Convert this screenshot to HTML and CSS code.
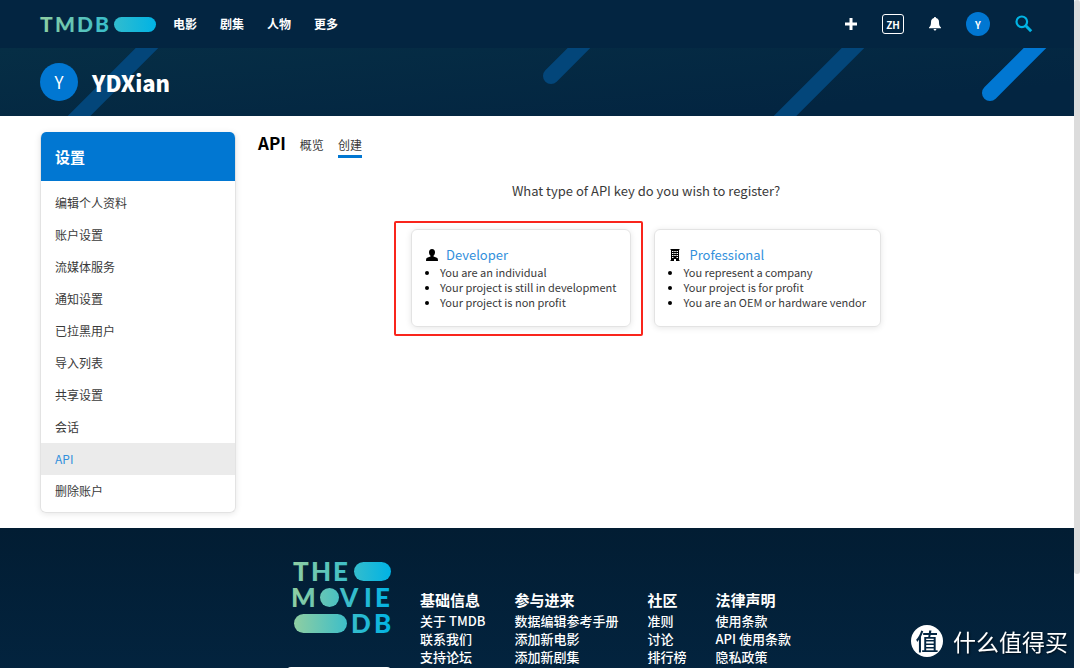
FILE: index.html
```
<!DOCTYPE html>
<html lang="zh-CN">
<head>
  <meta charset="UTF-8">
  <title>API - TMDB</title>
  <meta name="viewport" content="width=device-width, initial-scale=1.0">
  <link rel="stylesheet" href="styles.css">
</head>
<body>

  <div class="page">
    <header class="topbar">
      <a class="logo" href="#" aria-label="TMDB">
        <svg width="116" height="16" viewBox="0 0 116 16">
          <defs>
            <linearGradient id="brand" gradientUnits="userSpaceOnUse" x1="0" y1="0" x2="116" y2="0">
              <stop offset="0" stop-color="#90cea1"/>
              <stop offset="0.56" stop-color="#3cbec9"/>
              <stop offset="1" stop-color="#00b3e5"/>
            </linearGradient>
          </defs>
          <text class="logo-text" x="0 15 37 55" y="16" fill="url(#brand)">TMDB</text>
          <rect x="74" y="1" width="42" height="15" rx="7.5" fill="url(#brand)"/>
        </svg>
      </a>
      <nav class="menu">
        <a href="#">电影</a>
        <a href="#">剧集</a>
        <a href="#">人物</a>
        <a href="#">更多</a>
      </nav>
      <div class="actions">
        <button type="button" aria-label="添加">
          <svg width="12" height="12" viewBox="0 0 12 12"><path d="M4.500 0h3v4.500H12v3H7.500V12h-3V7.500H0v-3h4.500z" fill="#fff"/></svg>
        </button>
        <button type="button" class="lang">ZH</button>
        <button type="button" aria-label="通知">
          <svg width="12" height="14" viewBox="0 0 12 14"><path d="M6 0c.7 0 1 .4 1 1 2 .5 3 2 3 4 0 3.200.6 4.300 2 5.500v.7H0v-.7C1.400 9.300 2 8.200 2 5c0-2 1-3.500 3-4 0-.6.300-1 1-1zM4.600 12h2.800c0 .9-.6 1.500-1.400 1.500S4.600 12.900 4.600 12z" fill="#fff"/></svg>
        </button>
        <button type="button" class="avatar avatar-small">Y</button>
        <button type="button" aria-label="搜索">
          <svg width="18" height="18" viewBox="0 0 18 18" fill="none" stroke="#01b4e4"><circle cx="6.800" cy="6.800" r="5.300" stroke-width="2.200"/><path d="M10.800 10.800l5.400 5.400" stroke-width="3"/></svg>
        </button>
      </div>
    </header>

    <section class="banner">
      <svg class="stripes" viewBox="0 0 1074 68" preserveAspectRatio="xMidYMid slice" fill="none" stroke-width="16" stroke-linecap="round">
        <path d="M167-20L59 88M551 28l50-50M873-20L765 88" stroke="#03467a"/>
        <path d="M990 45l66-66" stroke="#0177d2"/>
      </svg>
      <span class="avatar avatar-large">Y</span>
      <h1>YDXian</h1>
    </section>

    <main class="content">
      <aside class="settings">
        <h2>设置</h2>
        <ul>
          <li><a href="#">编辑个人资料</a></li>
          <li><a href="#">账户设置</a></li>
          <li><a href="#">流媒体服务</a></li>
          <li><a href="#">通知设置</a></li>
          <li><a href="#">已拉黑用户</a></li>
          <li><a href="#">导入列表</a></li>
          <li><a href="#">共享设置</a></li>
          <li><a href="#">会话</a></li>
          <li><a href="#" class="active">API</a></li>
          <li><a href="#">删除账户</a></li>
        </ul>
      </aside>

      <section class="panel">
        <div class="tabs">
          <h2>API</h2>
          <a href="#">概览</a>
          <a href="#" class="active">创建</a>
        </div>
        <p class="question">What type of API key do you wish to register?</p>
        <div class="cards">
          <div class="card highlight">
            <h3>
              <svg width="12" height="12" viewBox="0 0 12 12"><path d="M6 0c2 0 3 1.300 3 3.200 0 1.600-.6 2.800-1.500 3.500v.8c1.800.7 4 1.100 4.300 2.300L12 12H0l.2-2.200c.3-1.200 2.500-1.600 4.300-2.300v-.8C3.600 6 3 4.800 3 3.200 3 1.300 4 0 6 0z"/></svg>
              <a href="#">Developer</a>
            </h3>
            <ul>
              <li>You are an individual</li>
              <li>Your project is still in development</li>
              <li>Your project is non profit</li>
            </ul>
          </div>
          <div class="card">
            <h3>
              <svg width="12" height="12" viewBox="0 0 12 12"><path fill-rule="evenodd" d="M1.500 0h9v1H10v10h.5v1H7V10H5v2H1.500v-1H2V1h-.5zM3 2v1h1.500V2zm2.250 0v1h1.500V2zM7.500 2v1H9V2zM3 4v1h1.500V4zm2.250 0v1h1.500V4zM7.500 4v1H9V4zM3 6v1h1.500V6zm2.250 0v1h1.500V6zM7.500 6v1H9V6zM3 8v1h1.500V8zm4.500 0v1H9V8z"/></svg>
              <a href="#">Professional</a>
            </h3>
            <ul>
              <li>You represent a company</li>
              <li>Your project is for profit</li>
              <li>You are an OEM or hardware vendor</li>
            </ul>
          </div>
        </div>
      </section>
    </main>

    <footer class="footer">
      <div class="join">
        <svg width="98" height="72" viewBox="0 0 98 72">
          <defs>
            <linearGradient id="stack" gradientUnits="userSpaceOnUse" x1="0" y1="0" x2="98" y2="0">
              <stop offset="0" stop-color="#90cea1"/>
              <stop offset="0.56" stop-color="#3cbec9"/>
              <stop offset="1" stop-color="#00b3e5"/>
            </linearGradient>
          </defs>
          <g class="stack-text" fill="url(#stack)">
            <text x="0 18 40" y="19">THE</text>
            <text x="-2" y="45">M</text>
            <text x="47 71 82" y="45">VIE</text>
            <text x="58 81" y="71">DB</text>
            <rect x="61" y="0" width="37" height="19" rx="9.500"/>
            <circle cx="36.500" cy="35.500" r="9.500"/>
            <rect x="1" y="52" width="53" height="19" rx="9.500"/>
          </g>
        </svg>
        <div class="join-box"></div>
      </div>
      <div class="links">
        <h3>基础信息</h3>
        <a href="#">关于 TMDB</a>
        <a href="#">联系我们</a>
        <a href="#">支持论坛</a>
      </div>
      <div class="links">
        <h3>参与进来</h3>
        <a href="#">数据编辑参考手册</a>
        <a href="#">添加新电影</a>
        <a href="#">添加新剧集</a>
      </div>
      <div class="links">
        <h3>社区</h3>
        <a href="#">准则</a>
        <a href="#">讨论</a>
        <a href="#">排行榜</a>
      </div>
      <div class="links">
        <h3>法律声明</h3>
        <a href="#">使用条款</a>
        <a href="#">API 使用条款</a>
        <a href="#">隐私政策</a>
      </div>
    </footer>
  </div>

  <div class="scrollbar"><div class="thumb"></div></div>

  <div class="watermark">
    <span class="mark">值</span>
    <span>什么值得买</span>
  </div>

</body>
</html>
```
FILE: styles.css
```
* {
  box-sizing: border-box;
}
body {
  margin: 0;
  height: 100vh;
  display: flex;
  overflow: hidden;
  font-family: "Noto Sans CJK SC", sans-serif;
  font-size: 12px;
  line-height: 16px;
  color: #3a3a3a;
  background: #fff;
}
h1, h2, h3, p, ul {
  margin: 0;
  padding: 0;
}
a {
  color: inherit;
  text-decoration: none;
}
button {
  display: flex;
  align-items: center;
  justify-content: center;
  padding: 0;
  border: none;
  background: none;
  color: #fff;
  font-family: inherit;
  cursor: pointer;
}
svg {
  display: block;
  overflow: visible;
}
.page {
  flex: 1;
  display: flex;
  flex-direction: column;
  overflow: hidden;
}

/* header */
.topbar {
  flex: none;
  display: flex;
  align-items: center;
  height: 48px;
  padding: 0 41px 0 40px;
  background: #032541;
  color: #fff;
}
.logo-text {
  font: 900 21px Lato, sans-serif;
}
.menu {
  display: flex;
  gap: 23px;
  margin-left: 17px;
  font-weight: 700;
}
.actions {
  display: flex;
  align-items: center;
  gap: 25px;
  margin-left: auto;
}
.lang {
  width: 22px;
  height: 20px;
  border: 1px solid #fff;
  border-radius: 3px;
  font-size: 10px;
  font-weight: 700;
}
.avatar {
  display: flex;
  align-items: center;
  justify-content: center;
  border-radius: 50%;
  background: #0177d2;
  color: #fff;
}
.avatar-small {
  width: 24px;
  height: 24px;
  font-size: 10px;
  font-weight: 700;
}
.avatar-large {
  width: 38px;
  height: 38px;
  font-size: 17px;
}

/* profile banner */
.banner {
  position: relative;
  flex: none;
  display: flex;
  align-items: center;
  gap: 14px;
  height: 68px;
  padding: 0 40px;
  background: linear-gradient(175deg, #062e45, #032541 80%);
}
.banner h1 {
  position: relative;
  font-size: 22px;
  font-weight: 900;
  line-height: 32px;
  color: #fff;
}
.banner .avatar {
  position: relative;
}
.stripes {
  position: absolute;
  top: 0;
  left: 0;
  width: 100%;
  height: 100%;
  overflow: hidden;
}

/* main area */
.content {
  flex: none;
  display: flex;
  align-items: flex-start;
  gap: 22px;
  padding: 16px 40px 15px;
}
.settings {
  width: 196px;
  border: 1px solid #e3e3e3;
  border-top: none;
  border-radius: 6px;
  box-shadow: 0 1px 6px rgba(0, 0, 0, 0.1);
  overflow: hidden;
}
.settings h2 {
  padding: 12px 14px;
  background: #0177d2;
  color: #fff;
  font-size: 15px;
  line-height: 25px;
}
.settings ul {
  padding: 6px 0 5px;
  list-style: none;
}
.settings a {
  display: block;
  padding: 8px 14px;
}
.settings .active {
  background: #ebebeb;
  color: #3290dc;
}
.panel {
  flex: 1;
}
.tabs {
  display: flex;
  align-items: flex-end;
  gap: 14px;
}
.tabs h2 {
  padding-bottom: 4px;
  color: #000;
  font-size: 17px;
  line-height: 22px;
}
.tabs a {
  padding-bottom: 2px;
  border-bottom: 3px solid transparent;
}
.tabs .active {
  border-color: #0177d2;
}
.question {
  margin-top: 23px;
  text-align: center;
  font-size: 13px;
  line-height: 20px;
}
.cards {
  display: flex;
  justify-content: center;
  gap: 23px;
  margin-top: 28px;
}
.card {
  position: relative;
  padding: 14px 14px 16px;
  border: 1px solid #e3e3e3;
  border-radius: 6px;
  box-shadow: 0 1px 6px rgba(0, 0, 0, 0.1);
}
.card h3 {
  display: flex;
  align-items: center;
  gap: 8px;
  color: #000;
  font-size: 13px;
  font-weight: 400;
  line-height: 21px;
}
.card h3 a {
  color: #3290dc;
}
.card ul {
  padding-left: 14px;
  font-size: 11px;
  line-height: 15px;
}
.card li::marker {
  color: #000;
}
/* red frame drawn round the chosen card */
.highlight::after {
  content: "";
  position: absolute;
  top: -9px;
  right: -13px;
  bottom: -10px;
  left: -18px;
  border: 2px solid #f9251c;
  border-radius: 2px;
}

/* footer */
.footer {
  flex: 1 0 auto;
  display: flex;
  justify-content: center;
  gap: 29px;
  padding-top: 34px;
  background: linear-gradient(180deg, #021d33, #032541);
  color: #fff;
}
.join {
  display: flex;
  flex-direction: column;
  align-items: flex-end;
  width: 108px;
}
.stack-text {
  font: 900 26px Lato, sans-serif;
}
.join-box {
  width: 104px;
  height: 36px;
  margin-top: 33px;
  border-radius: 4px;
  background: #fff;
}
.links {
  display: flex;
  flex-direction: column;
  margin-top: 26px;
  font-size: 13px;
  font-weight: 500;
  line-height: 18px;
}
.links h3 {
  font-size: 15px;
  line-height: 24px;
}

/* scrollbar and corner mark */
.scrollbar {
  width: 6px;
  background: #fafafa;
}
.thumb {
  height: 86%;
  border-radius: 3px;
  background: #dcdcdc;
}
.watermark {
  position: fixed;
  right: 12px;
  bottom: 10px;
  display: flex;
  align-items: center;
  gap: 10px;
  color: #fff;
  font-size: 23px;
  font-weight: 400;
  line-height: 34px;
  text-shadow: 1px 1px 2px rgba(0, 0, 0, 0.6);
}
.mark {
  width: 32px;
  height: 32px;
  border-radius: 50%;
  background: #fff;
  color: #032541;
  font-weight: 500;
  text-align: center;
  line-height: 30px;
  text-shadow: none;
}
```
